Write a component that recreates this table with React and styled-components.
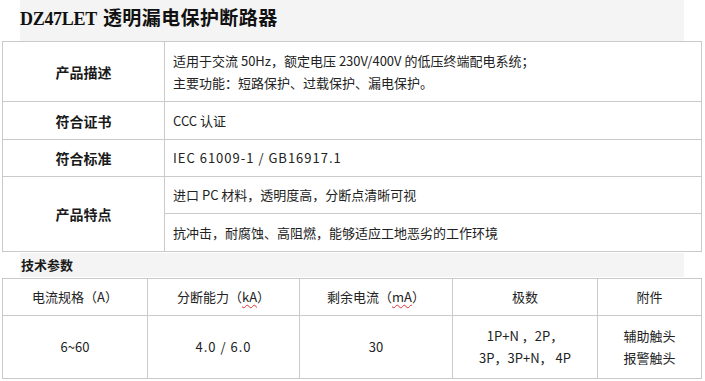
import React from "react";
import styled, { createGlobalStyle } from "styled-components";

const Global = createGlobalStyle`
  html, body { margin: 0; padding: 0; background: #fff; }
  body { font-family: "Noto Sans CJK SC", "Liberation Sans", sans-serif; color: #222; }
`;

const Page = styled.div`
  width: 705px;
  height: 381px;
  overflow: hidden;
  display: flex;
  flex-direction: column;
`;

const TitleBand = styled.div`
  margin-left: 20px;
  width: 664px;
  height: 41px;
  background: #f4f4f4;
  display: flex;
  align-items: flex-start;
`;

const Title = styled.h1`
  margin: 5px 0 0 0;
  font-size: 19px;
  line-height: 24px;
  font-weight: 700;
  color: #111;
  font-family: "Noto Sans CJK SC", sans-serif;
  letter-spacing: 0.4px;
`;

const TitleLatin = styled.span`
  font-family: "Liberation Serif", "Noto Sans CJK SC", serif;
  font-size: 18px;
  letter-spacing: -0.3px;
  margin-right: 6px;
`;

const Table = styled.table`
  margin-left: 2px;
  width: 700px;
  border-collapse: collapse;
  table-layout: fixed;
  font-size: 13px;
  color: #222;
`;

const Row = styled.tr`
  height: ${(p) => p.$h}px;
`;

const Cell = styled.td`
  border: 1px solid #cacaca;
  padding: 0 8px;
  vertical-align: middle;
  line-height: 22px;
  text-align: ${(p) => (p.$center ? "center" : "left")};
  white-space: nowrap;
`;

const Label = styled.td`
  border: 1px solid #cacaca;
  text-align: center;
  vertical-align: middle;
  font-weight: 700;
  font-size: 14px;
  color: #1a1a1a;
`;

const SectionBand = styled.div`
  margin: 1px 0 1px 20px;
  width: 664px;
  height: 24px;
  background: #f4f4f4;
  display: flex;
  align-items: center;
`;

const SectionTitle = styled.h2`
  margin: 0 0 0 1px;
  font-size: 13px;
  font-weight: 700;
  color: #1a1a1a;
  line-height: 20px;
`;

const Spell = styled.span`
  text-decoration: underline wavy #e03030;
  text-decoration-thickness: 1px;
  text-underline-offset: 2px;
`;

const Spaced = styled.span`
  letter-spacing: 1px;
`;

const Line = styled.div``;

export default function App() {
  return (
    <Page>
      <Global />
      <TitleBand>
        <Title>
          <TitleLatin>DZ47LET</TitleLatin>透明漏电保护断路器
        </Title>
      </TitleBand>
      <Table>
        <colgroup>
          <col style={{ width: 162 }} />
          <col />
        </colgroup>
        <tbody>
          <Row $h={60}>
            <Label>产品描述</Label>
            <Cell>
              <Line>适用于交流 50Hz，额定电压 230V/400V 的低压终端配电系统；</Line>
              <Line>主要功能：短路保护、过载保护、漏电保护。</Line>
            </Cell>
          </Row>
          <Row $h={38}>
            <Label>符合证书</Label>
            <Cell>CCC 认证</Cell>
          </Row>
          <Row $h={37}>
            <Label>符合标准</Label>
            <Cell>
              <Spaced>IEC 61009-1 / GB16917.1</Spaced>
            </Cell>
          </Row>
          <Row $h={37}>
            <Label rowSpan={2}>产品特点</Label>
            <Cell>进口 PC 材料，透明度高，分断点清晰可视</Cell>
          </Row>
          <Row $h={38}>
            <Cell>抗冲击，耐腐蚀、高阻燃，能够适应工地恶劣的工作环境</Cell>
          </Row>
        </tbody>
      </Table>
      <SectionBand>
        <SectionTitle>技术参数</SectionTitle>
      </SectionBand>
      <Table>
        <colgroup>
          <col style={{ width: 145 }} />
          <col style={{ width: 152 }} />
          <col style={{ width: 153 }} />
          <col style={{ width: 145 }} />
          <col />
        </colgroup>
        <tbody>
          <Row $h={37}>
            <Cell $center>电流规格（A）</Cell>
            <Cell $center>
              分断能力（<Spell>kA</Spell>）
            </Cell>
            <Cell $center>
              剩余电流（<Spell>mA</Spell>）
            </Cell>
            <Cell $center>极数</Cell>
            <Cell $center>附件</Cell>
          </Row>
          <Row $h={63}>
            <Cell $center>6~60</Cell>
            <Cell $center>
              <Spaced>4.0 / 6.0</Spaced>
            </Cell>
            <Cell $center>30</Cell>
            <Cell $center>
              <Line>1P+N ，2P，</Line>
              <Line>3P，3P+N， 4P</Line>
            </Cell>
            <Cell $center>
              <Line>辅助触头</Line>
              <Line>报警触头</Line>
            </Cell>
          </Row>
        </tbody>
      </Table>
    </Page>
  );
}
